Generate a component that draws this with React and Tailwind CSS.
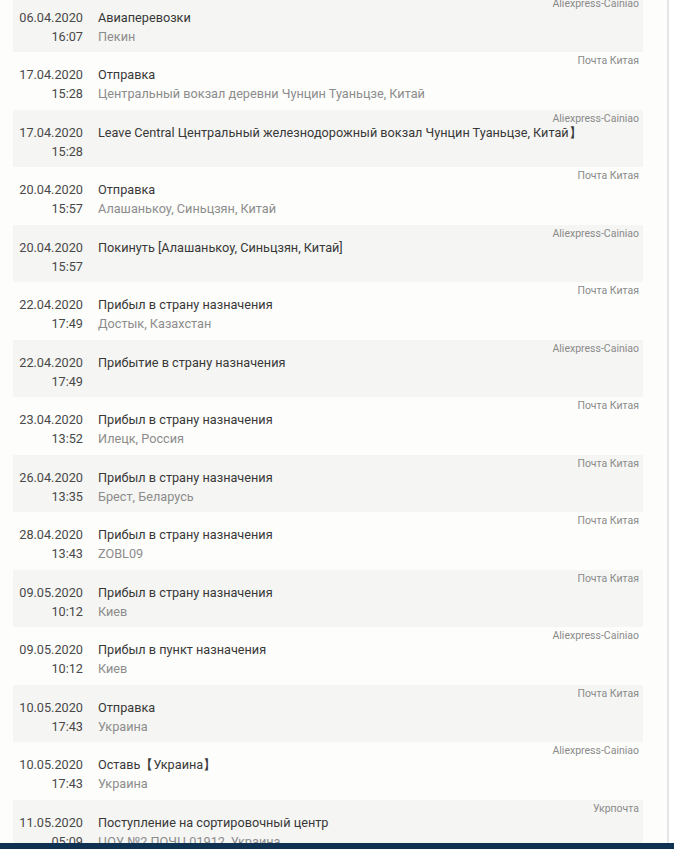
const events = [
    { date: "06.04.2020", time: "16:07", title: "Авиаперевозки", place: "Пекин", source: "Aliexpress-Cainiao" },
    { date: "17.04.2020", time: "15:28", title: "Отправка", place: "Центральный вокзал деревни Чунцин Туаньцзе, Китай", source: "Почта Китая" },
    { date: "17.04.2020", time: "15:28", title: "Leave Central Центральный железнодорожный вокзал Чунцин Туаньцзе, Китай】", place: "", source: "Aliexpress-Cainiao" },
    { date: "20.04.2020", time: "15:57", title: "Отправка", place: "Алашанькоу, Синьцзян, Китай", source: "Почта Китая" },
    { date: "20.04.2020", time: "15:57", title: "Покинуть [Алашанькоу, Синьцзян, Китай]", place: "", source: "Aliexpress-Cainiao" },
    { date: "22.04.2020", time: "17:49", title: "Прибыл в страну назначения", place: "Достык, Казахстан", source: "Почта Китая" },
    { date: "22.04.2020", time: "17:49", title: "Прибытие в страну назначения", place: "", source: "Aliexpress-Cainiao" },
    { date: "23.04.2020", time: "13:52", title: "Прибыл в страну назначения", place: "Илецк, Россия", source: "Почта Китая" },
    { date: "26.04.2020", time: "13:35", title: "Прибыл в страну назначения", place: "Брест, Беларусь", source: "Почта Китая" },
    { date: "28.04.2020", time: "13:43", title: "Прибыл в страну назначения", place: "ZOBL09", source: "Почта Китая" },
    { date: "09.05.2020", time: "10:12", title: "Прибыл в страну назначения", place: "Киев", source: "Почта Китая" },
    { date: "09.05.2020", time: "10:12", title: "Прибыл в пункт назначения", place: "Киев", source: "Aliexpress-Cainiao" },
    { date: "10.05.2020", time: "17:43", title: "Отправка", place: "Украина", source: "Почта Китая" },
    { date: "10.05.2020", time: "17:43", title: "Оставь【Украина】", place: "Украина", source: "Aliexpress-Cainiao" },
    { date: "11.05.2020", time: "05:09", title: "Поступление на сортировочный центр", place: "ЦОУ №2 ПОЧЦ 01912, Украина", source: "Укрпочта" },
]

function EventRow({ ev, shaded }) {
    return (
        <div className={"relative h-[57.5px] shrink-0 " + (shaded ? "bg-[#f5f5f3]" : "")}>
            <div className="absolute top-[3px] right-[4px] text-[10.5px] leading-[12px] text-[#8a8a8a]">
                {ev.source}
            </div>
            <div className="flex pt-[13px] text-[12.7px] leading-[19px]">
                <div className="w-[70px] shrink-0 text-right text-[#484848]">
                    <div>{ev.date}</div>
                    <div>{ev.time}</div>
                </div>
                <div className="pl-[15px] min-w-0">
                    <div className="text-[#383838] whitespace-nowrap">{ev.title}</div>
                    <div className="text-[#8c8c8c] whitespace-nowrap">{ev.place}</div>
                </div>
            </div>
        </div>
    )
}

export default function App() {
    return (
        <div
            className="relative h-[849px] w-full overflow-hidden bg-white"
            style={{ fontFamily: "Roboto, 'Liberation Sans', sans-serif" }}
        >
            <div className="flex h-full">
                <div className="w-[669px] shrink-0 h-full border-r-2 border-[#e6e6e6] bg-[#fdfdfb] pl-[13px] pr-[24px]">
                    <div className="flex flex-col -mt-[5.5px]">
                        {events.map((ev, i) => (
                            <EventRow key={i} ev={ev} shaded={i % 2 === 0} />
                        ))}
                    </div>
                </div>
            </div>
            <div className="absolute bottom-0 left-0 right-0 h-[6px] bg-[#0f3152]" />
        </div>
    )
}
